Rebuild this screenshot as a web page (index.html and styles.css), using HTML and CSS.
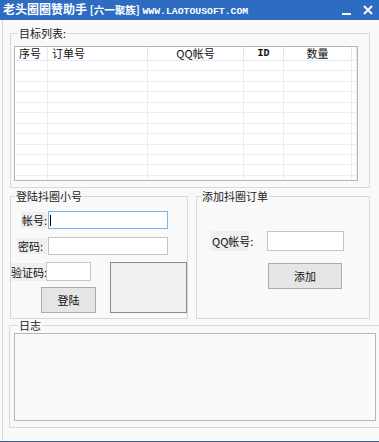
FILE: index.html
```html
<!DOCTYPE html>
<html lang="zh-CN">
<head>
    <meta charset="UTF-8">
    <title>老头圈圈赞助手</title>
    <link rel="stylesheet" href="styles.css">
</head>
<body>
    <div class="window">
        <div class="titlebar">
            <span class="title">老头圈圈赞助手 <span class="tag">[六一聚族]</span> <span class="url">WWW.LAOTOUSOFT.COM</span></span>
            <div class="controls">
                <svg class="ctl" width="12" height="12" viewBox="0 0 12 12"><rect x="1" y="9" width="9" height="2" fill="#fff"/></svg>
                <svg class="ctl" width="12" height="12" viewBox="0 0 12 12"><path d="M2 2 L10 10 M10 2 L2 10" stroke="#fff" stroke-width="2"/></svg>
            </div>
        </div>
        <div class="client">
            <fieldset class="group list-group">
                <legend>目标列表:</legend>
                <div class="listview">
                    <div class="lv-head">
                        <div class="col c1 left">序号</div>
                        <div class="col c2 left">订单号</div>
                        <div class="col c3">QQ帐号</div>
                        <div class="col c4">ID</div>
                        <div class="col c5">数量</div>
                        <div class="col c6"></div>
                    </div>
                    <div class="lv-body">
                        <div class="col c1"></div>
                        <div class="col c2"></div>
                        <div class="col c3"></div>
                        <div class="col c4"></div>
                        <div class="col c5"></div>
                        <div class="col c6"></div>
                    </div>
                </div>
            </fieldset>

            <div class="middle">
                <fieldset class="group login-group">
                    <legend>登陆抖圈小号</legend>
                    <div class="row row-user">
                        <span class="lbl">帐号:</span>
                        <div class="input focused"><span class="caret"></span></div>
                    </div>
                    <div class="row row-pass">
                        <span class="lbl">密码:</span>
                        <div class="input"></div>
                    </div>
                    <div class="row row-code">
                        <div class="code-left">
                            <div class="code-line">
                                <span class="lbl">验证码:</span>
                                <div class="input small"></div>
                            </div>
                            <button class="btn login-btn">登陆</button>
                        </div>
                        <div class="captcha"></div>
                    </div>
                </fieldset>

                <fieldset class="group add-group">
                    <legend>添加抖圈订单</legend>
                    <div class="row row-qq">
                        <span class="lbl">QQ帐号:</span>
                        <div class="input qq"></div>
                    </div>
                    <button class="btn add-btn">添加</button>
                </fieldset>
            </div>

            <fieldset class="group log-group">
                <legend>日志</legend>
                <div class="logbox"></div>
            </fieldset>
        </div>
    </div>
</body>
</html>
```

FILE: styles.css
```css
* {
    margin: 0;
    padding: 0;
    box-sizing: border-box;
}
body {
    width: 379px;
    height: 442px;
    overflow: hidden;
    background: #f9f9f9;
    font-family: "Noto Sans CJK SC", "Liberation Sans", sans-serif;
    font-size: 11px;
    color: #111;
}
.window {
    width: 379px;
    height: 442px;
    border-bottom: 1px solid #3d62a0;
    overflow: hidden;
}
.titlebar {
    height: 20px;
    background: #2e6cc2;
    color: #fff;
    display: flex;
    align-items: center;
    justify-content: space-between;
    padding-left: 3px;
}
.title {
    font-weight: bold;
    font-size: 12px;
    line-height: 20px;
    white-space: nowrap;
}
.tag {
    font-size: 10.5px;
}
.url {
    font-family: "Liberation Mono", monospace;
    font-size: 9.8px;
}
.controls {
    display: flex;
    gap: 9px;
    padding-right: 5px;
}
.client {
    height: 421px;
    margin-left: 2px;
    border-left: 1px solid #d4d4d4;
    padding: 7px 0 0 7px;
}
.group {
    border: 1px solid #d9d9d9;
    background: #f9f9f9;
}
.group legend {
    margin-left: 4px;
    padding: 0 1px;
    font-size: 11px;
    line-height: 12px;
    height: 12px;
    color: #222;
}
.list-group {
    width: 360px;
    height: 161px;
    padding: 7px 0 0 3px;
}
.listview {
    width: 344px;
    height: 135px;
    border: 1px solid #b5b5b8;
    background: #fff;
    display: flex;
    flex-direction: column;
}
.lv-head {
    height: 14px;
    display: flex;
    border-bottom: 1px solid #e3ecf7;
}
.lv-head .col {
    border-right: 1px solid #dce6f2;
    text-align: center;
    line-height: 13px;
    font-size: 11px;
}
.lv-head .left {
    text-align: left;
    padding-left: 4px;
}
.lv-body {
    flex: 1;
    display: flex;
    background: repeating-linear-gradient(to bottom, transparent 0, transparent 9.45px, #ededed 9.45px, #ededed 10.45px);
}
.lv-body .col {
    border-right: 1px solid #ededed;
}
.c1 { width: 33px; }
.c2 { width: 100px; }
.c3 { width: 96px; }
.c4 { width: 40px; }
.c5 { width: 68px; }
.c6 { width: 5px; }
.lv-head .c4 {
    font-family: "Liberation Mono", monospace;
    font-weight: bold;
    font-size: 10px;
}
.middle {
    display: flex;
    gap: 8px;
    margin-top: 2px;
}
.login-group {
    width: 178px;
    height: 129px;
    padding: 0;
}
.add-group {
    width: 174px;
    height: 129px;
    padding: 0;
}
.row {
    display: flex;
    align-items: center;
}
.lbl {
    background: #efefef;
    line-height: 16px;
    height: 16px;
    white-space: nowrap;
}
.input {
    height: 18px;
    background: #fff;
    border: 1px solid #c5c5c5;
}
.input.focused {
    border-color: #7eb4ea;
    padding: 3px 0 0 1px;
}
.caret {
    display: block;
    width: 1px;
    height: 11px;
    background: #000;
}
.row-user {
    margin: 9px 0 0 10px;
}
.row-user .lbl {
    width: 26px;
    padding-left: 1px;
}
.row-user .input {
    width: 120px;
    margin-left: 1px;
}
.row-pass {
    margin: 8px 0 0 6px;
}
.row-pass .lbl {
    width: 30px;
    padding-left: 1px;
}
.row-pass .input {
    width: 120px;
    margin-left: 1px;
}
.row-code {
    margin: 7px 0 0 0;
    align-items: flex-start;
}
.code-left {
    display: flex;
    flex-direction: column;
}
.code-line {
    display: flex;
    align-items: center;
}
.code-line .lbl {
    width: 34px;
    height: 18px;
    line-height: 18px;
}
.code-line .input {
    width: 45px;
    height: 19px;
    margin-left: 1px;
}
.btn {
    font-family: "Noto Sans CJK SC", sans-serif;
    font-size: 11px;
    background: #e5e5e5;
    border: 1px solid #acacac;
    color: #111;
}
.login-btn {
    width: 55px;
    height: 26px;
    margin: 6px 0 0 30px;
}
.captcha {
    width: 77px;
    height: 51px;
    margin-left: 14px;
    background: #f0f0f0;
    border: 1px solid #8c8c8c;
}
.row-qq {
    margin: 29px 0 0 14px;
}
.row-qq .lbl {
    width: 38px;
    height: 20px;
    line-height: 20px;
    padding-left: 1px;
}
.input.qq {
    width: 77px;
    height: 20px;
    margin-left: 18px;
}
.add-btn {
    width: 74px;
    height: 26px;
    margin: 12px 0 0 71px;
}
.log-group {
    width: 380px;
    height: 109px;
    padding: 2px 0 0 4px;
    margin-left: -1px;
}
.logbox {
    width: 362px;
    height: 88px;
    background: #fafafa;
    border: 1px solid #b8b8b8;
}
```
